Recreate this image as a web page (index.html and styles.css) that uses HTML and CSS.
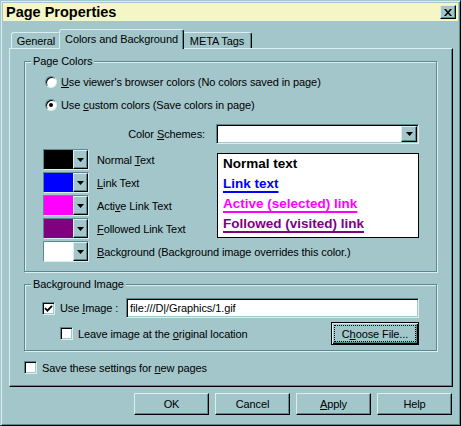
FILE: index.html
```html
<!DOCTYPE html>
<html>
<head>
<meta charset="utf-8">
<title>Page Properties</title>
<link rel="stylesheet" href="styles.css">
</head>
<body>
<div class="window">
  <div class="titlebar">
    <span class="title">Page Properties</span>
    <span class="close"><svg width="8" height="7" viewBox="0 0 8 7"><path d="M0 0h2l2 2.4L6 0h2L5 3.5 8 7H6L4 4.6 2 7H0l3-3.5z" fill="#000"/></svg></span>
  </div>
  <div class="tabs">
    <div class="tab t-general">General</div>
    <div class="tab active t-colors">Colors and Background</div>
    <div class="tab t-meta">META Tags</div>
  </div>
  <div class="panel">
    <fieldset class="group colors-group">
      <legend>Page Colors</legend>
      <div class="radio-row r1"><span class="radio"></span><span><u>U</u>se viewer's browser colors (No colors saved in page)</span></div>
      <div class="radio-row r2"><span class="radio checked"></span><span>Use <u>c</u>ustom colors (Save colors in page)</span></div>
      <div class="scheme-row">
        <span class="scheme-label">Color <u>S</u>chemes:</span>
        <div class="combo"><span class="drop"><svg width="7" height="4" viewBox="0 0 7 4"><path d="M0 0h7L3.5 4z" fill="#000"/></svg></span></div>
      </div>
      <div class="color-grid">
        <div class="swrow"><span class="swatch"><span class="fill c-black"></span><span class="sdrop"><svg width="7" height="4" viewBox="0 0 7 4"><path d="M0 0h7L3.5 4z" fill="#000"/></svg></span></span><span class="swlabel">Normal <u>T</u>ext</span></div>
        <div class="swrow"><span class="swatch"><span class="fill c-blue"></span><span class="sdrop"><svg width="7" height="4" viewBox="0 0 7 4"><path d="M0 0h7L3.5 4z" fill="#000"/></svg></span></span><span class="swlabel"><u>L</u>ink Text</span></div>
        <div class="swrow"><span class="swatch"><span class="fill c-magenta"></span><span class="sdrop"><svg width="7" height="4" viewBox="0 0 7 4"><path d="M0 0h7L3.5 4z" fill="#000"/></svg></span></span><span class="swlabel">Acti<u>v</u>e Link Text</span></div>
        <div class="swrow"><span class="swatch"><span class="fill c-purple"></span><span class="sdrop"><svg width="7" height="4" viewBox="0 0 7 4"><path d="M0 0h7L3.5 4z" fill="#000"/></svg></span></span><span class="swlabel"><u>F</u>ollowed Link Text</span></div>
        <div class="preview">
          <div class="pv-line">Normal text</div>
          <div class="pv-line"><span class="lnk c-link">Link text</span></div>
          <div class="pv-line"><span class="lnk c-active">Active (selected) link</span></div>
          <div class="pv-line"><span class="lnk c-visited">Followed (visited) link</span></div>
        </div>
        <div class="swrow full"><span class="swatch"><span class="fill c-white"></span><span class="sdrop"><svg width="7" height="4" viewBox="0 0 7 4"><path d="M0 0h7L3.5 4z" fill="#000"/></svg></span></span><span class="swlabel"><u>B</u>ackground (Background image overrides this color.)</span></div>
      </div>
    </fieldset>

    <fieldset class="group bg-group">
      <legend>Background Image</legend>
      <div class="use-row">
        <span class="checkbox"><svg width="9" height="9" viewBox="0 0 9 9"><path d="M1 4.2 3.4 6.6 8 1.8" fill="none" stroke="#000" stroke-width="1.9"/></svg></span>
        <span class="use-label">Use <u>I</u>mage :</span>
        <div class="field">file:///D|/Graphics/1.gif</div>
      </div>
      <div class="leave-row">
        <span class="checkbox"></span>
        <span class="cb-label">Leave image at the <u>o</u>riginal location</span>
        <button class="btn default"><span class="focus">C<u>h</u>oose File...</span></button>
      </div>
    </fieldset>

    <div class="save-row">
      <span class="checkbox"></span>
      <span class="cb-label">Save these settings for <u>n</u>ew pages</span>
    </div>
  </div>
  <div class="buttons">
    <button class="btn">OK</button>
    <button class="btn">Cancel</button>
    <button class="btn"><span><u>A</u>pply</span></button>
    <button class="btn">Help</button>
  </div>
</div>
</body>
</html>
```
FILE: styles.css
```css
:root {
  --face: #a3c6cb;
  --hi: #dbeff1;
  --sh: #5a8a90;
  --dk: #000;
}
* { box-sizing: border-box; }
html, body { margin: 0; padding: 0; background: var(--face); }
body {
  font-family: "Liberation Sans", Arial, sans-serif;
  font-size: 11px;
  letter-spacing: -0.1px;
  color: #000;
  line-height: 14px;
}
u { text-decoration: underline; text-underline-offset: 1px; }

.window {
  width: 461px;
  height: 426px;
  border: 1px solid;
  border-color: var(--face) var(--dk) var(--dk) var(--face);
  box-shadow: inset 1px 1px 0 var(--hi), inset -1px -1px 0 var(--sh);
  padding: 2px;
  display: flex;
  flex-direction: column;
}

.titlebar {
  height: 18px;
  flex: none;
  background: #f4f6c6;
  display: flex;
  justify-content: space-between;
  align-items: flex-start;
}
.title {
  font-weight: bold;
  font-size: 14.5px;
  line-height: 18px;
  letter-spacing: 0;
  padding-left: 3px;
}
.close {
  width: 16px;
  height: 14px;
  margin: 2px 2px 0 0;
  border: 1px solid;
  border-color: var(--hi) var(--dk) var(--dk) var(--hi);
  box-shadow: inset -1px -1px 0 var(--sh);
  background: var(--face);
  display: flex;
  align-items: center;
  justify-content: center;
}

.tabs {
  display: flex;
  align-items: flex-end;
  height: 19px;
  flex: none;
  margin: 8px 0 0 8px;
}
.tab {
  height: 16px;
  display: flex;
  align-items: center;
  justify-content: center;
  border: 1px solid;
  border-bottom: none;
  border-color: var(--hi) var(--dk) transparent var(--hi);
  box-shadow: inset -1px 0 0 var(--sh);
  border-radius: 3px 3px 0 0;
  background: var(--face);
}
.t-general { width: 50px; }
.t-colors { width: 125px; }
.t-meta { width: 70px; }
.tab.active {
  height: 20px;
  margin: 0 -2px -1px;
  position: relative;
  z-index: 2;
  padding-bottom: 1px;
}

.panel {
  margin-left: 6px;
  width: 444px;
  height: 339px;
  flex: none;
  border: 1px solid;
  border-color: var(--hi) var(--dk) var(--dk) var(--hi);
  box-shadow: inset -1px -1px 0 var(--sh);
  display: flex;
  flex-direction: column;
}

.group {
  margin: 6px 0 0 14px;
  width: 413px;
  min-inline-size: 0;
  padding: 0 0 9px;
  border: 1px solid var(--sh);
  box-shadow: inset 1px 1px 0 var(--hi), 1px 1px 0 var(--hi);
}
.group legend {
  padding: 0 2px;
  margin-left: 6px;
  line-height: 13px;
  height: 13px;
  background: var(--face);
}

.radio-row {
  display: flex;
  align-items: center;
  height: 14px;
  padding-left: 20px;
}
.r1 { margin-top: 7px; }
.r2 { margin-top: 9px; }
.radio {
  width: 12px;
  height: 12px;
  flex: none;
  border-radius: 50%;
  background: #fff;
  border: 1px solid;
  border-color: var(--sh) var(--hi) var(--hi) var(--sh);
  box-shadow: inset 1px 1px 0 #000;
  margin-right: 4px;
  position: relative;
}
.radio.checked::after {
  content: "";
  position: absolute;
  left: 3px;
  top: 3px;
  width: 4px;
  height: 4px;
  border-radius: 50%;
  background: #000;
}

.scheme-row {
  display: flex;
  align-items: center;
  height: 20px;
  margin-top: 12px;
}
.scheme-label {
  width: 180px;
  text-align: right;
  margin-right: 11px;
}
.combo {
  width: 203px;
  height: 20px;
  background: #fff;
  border: 1px solid;
  border-color: var(--sh) var(--hi) var(--hi) var(--sh);
  box-shadow: inset 1px 1px 0 #000, inset -1px -1px 0 var(--face);
  display: flex;
  justify-content: flex-end;
  align-items: center;
  padding: 1px;
}
.drop, .sdrop {
  width: 16px;
  height: 16px;
  flex: none;
  background: var(--face);
  border: 1px solid;
  border-color: var(--hi) var(--dk) var(--dk) var(--hi);
  box-shadow: inset -1px -1px 0 var(--sh);
  display: flex;
  align-items: center;
  justify-content: center;
}

.color-grid {
  display: grid;
  grid-template-columns: 174px 202px;
  grid-auto-rows: 21px;
  row-gap: 2px;
  margin-top: 5px;
  padding-left: 18px;
}
.swrow {
  grid-column: 1;
  display: flex;
  align-items: center;
}
.swrow.full { grid-column: 1 / -1; }
.swatch {
  width: 46px;
  height: 21px;
  flex: none;
  display: flex;
  border: 1px solid;
  border-color: var(--sh) var(--hi) var(--hi) var(--sh);
}
.swatch .fill { width: 29px; height: 19px; }
.swatch .sdrop { width: 15px; height: 19px; }
.c-black { background: #000; }
.c-blue { background: #0000ff; }
.c-magenta { background: #ff00ff; }
.c-purple { background: #800080; }
.c-white { background: #fff; }
.swlabel { margin-left: 8px; white-space: nowrap; }

.preview {
  grid-column: 2;
  grid-row: 1 / 5;
  margin-top: 4px;
  height: 85px;
  background: #fff;
  border: 1px solid #000;
  padding-left: 5px;
  font-size: 13.5px;
  font-weight: bold;
  line-height: 20px;
  letter-spacing: 0;
}
.lnk {
  text-decoration: underline;
  text-decoration-thickness: 2px;
  text-underline-offset: 3px;
}
.c-link { color: #0000ff; }
.c-active { color: #ff00ff; }
.c-visited { color: #800080; }

.bg-group { padding-bottom: 5px; }
.use-row {
  display: flex;
  align-items: center;
  height: 20px;
  margin-top: 7px;
  padding-left: 17px;
}
.checkbox {
  width: 13px;
  height: 13px;
  flex: none;
  background: #fff;
  border: 1px solid;
  border-color: var(--sh) var(--hi) var(--hi) var(--sh);
  box-shadow: inset 1px 1px 0 #000, inset -1px -1px 0 var(--face);
  display: flex;
  align-items: center;
  justify-content: center;
}
.use-label { width: 66px; margin-left: 5px; }
.field {
  width: 293px;
  height: 20px;
  background: #fff;
  border: 1px solid;
  border-color: var(--sh) var(--hi) var(--hi) var(--sh);
  box-shadow: inset 1px 1px 0 #000, inset -1px -1px 0 var(--face);
  padding: 2px 0 0 3px;
  line-height: 15px;
}
.leave-row {
  display: flex;
  align-items: center;
  height: 23px;
  margin-top: 4px;
  padding-left: 35px;
  padding-right: 17px;
}
.cb-label { margin-left: 5px; }

.btn {
  font: inherit;
  letter-spacing: inherit;
  color: #000;
  padding: 0;
  margin: 0;
  width: 75px;
  height: 22px;
  background: var(--face);
  border: 1px solid;
  border-color: var(--hi) var(--dk) var(--dk) var(--hi);
  box-shadow: inset -1px -1px 0 var(--sh);
  display: flex;
  align-items: center;
  justify-content: center;
}
.btn.default {
  margin-left: auto;
  width: 88px;
  height: 23px;
  border: 1px solid #000;
  box-shadow: inset 1px 1px 0 var(--hi), inset -1px -1px 0 #000, inset -2px -2px 0 var(--sh);
}
.focus {
  display: flex;
  align-items: center;
  justify-content: center;
  width: 80px;
  height: 15px;
  outline: 1px dotted #000;
}

.save-row {
  display: flex;
  align-items: center;
  height: 13px;
  margin: 10px 0 0 14px;
}

.buttons {
  display: flex;
  justify-content: flex-end;
  gap: 6px;
  margin: 6px 6px 0 0;
}
```
